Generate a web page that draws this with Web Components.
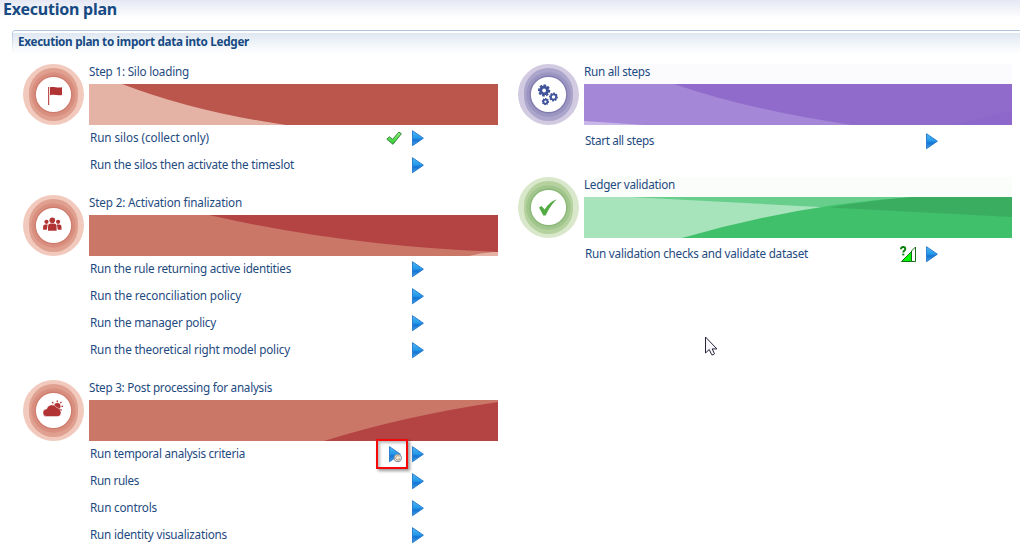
<!DOCTYPE html>
<html lang="en">
<head>
<meta charset="utf-8">
<title>Execution plan</title>
<style>
html,body{margin:0;width:1020px;height:556px;overflow:hidden;background:#fff}
body{font-family:"Noto Sans","Open Sans",sans-serif;font-size:11.7px;color:#1e4a80}
</style>
</head>
<body>
<plan-page>
  <plan-column>
    <plan-step icon="flag" tone="red" banner="silo">
      <fit-text slot="title" width="100">Step 1: Silo loading</fit-text>
      <plan-task status="check"><fit-text width="119">Run silos (collect only)</fit-text></plan-task>
      <plan-task><fit-text width="204">Run the silos then activate the timeslot</fit-text></plan-task>
    </plan-step>
    <plan-step icon="people" tone="red" banner="activation">
      <fit-text slot="title" width="153">Step 2: Activation finalization</fit-text>
      <plan-task><fit-text width="201">Run the rule returning active identities</fit-text></plan-task>
      <plan-task><fit-text width="151">Run the reconciliation policy</fit-text></plan-task>
      <plan-task><fit-text width="126">Run the manager policy</fit-text></plan-task>
      <plan-task><fit-text width="200">Run the theoretical right model policy</fit-text></plan-task>
    </plan-step>
    <plan-step icon="weather" tone="red" banner="analysis">
      <fit-text slot="title" width="183">Step 3: Post processing for analysis</fit-text>
      <plan-task status="schedule"><fit-text width="155">Run temporal analysis criteria</fit-text></plan-task>
      <plan-task><fit-text width="49">Run rules</fit-text></plan-task>
      <plan-task><fit-text width="67">Run controls</fit-text></plan-task>
      <plan-task><fit-text width="137">Run identity visualizations</fit-text></plan-task>
    </plan-step>
  </plan-column>
  <plan-column wide>
    <plan-step icon="gears" tone="purple" banner="all">
      <fit-text slot="title" width="66">Run all steps</fit-text>
      <plan-task><fit-text width="69">Start all steps</fit-text></plan-task>
    </plan-step>
    <plan-step icon="tick" tone="green" banner="validation">
      <fit-text slot="title" width="91">Ledger validation</fit-text>
      <plan-task status="question"><fit-text width="223">Run validation checks and validate dataset</fit-text></plan-task>
    </plan-step>
  </plan-column>
</plan-page>
<script>
/* Text line that adjusts its letter spacing to fill a given width. */
class FitText extends HTMLElement{
  constructor(){
    super();
    this.attachShadow({mode:'open'}).innerHTML='<style>:host{display:inline-block;white-space:nowrap}</style><slot></slot>';
  }
  fit(){
    this.style.letterSpacing='0px';
    const w=this.getBoundingClientRect().width;
    this.style.letterSpacing=((+this.getAttribute('width')-w)/this.textContent.length).toFixed(3)+'px';
  }
}

class PlanPage extends HTMLElement{
  constructor(){
    super();
    this.attachShadow({mode:'open'}).innerHTML=`<style>
:host{display:flex;flex-direction:column;width:1020px;height:556px;position:relative;background:linear-gradient(#e5e8f4,#fff 18px)}
h1{margin:0;height:30px;padding-left:3px;font-size:16px;line-height:19px;font-weight:700;color:#174a83;box-sizing:border-box}
h2{margin:0 0 0 12px;height:24px;box-sizing:border-box;border-top:1px solid #b0c3da;border-top-left-radius:4px;padding:1px 0 0 1px;position:relative;color:#174a83;font-size:11.7px;line-height:19px;font-weight:700;background:linear-gradient(#b0c3da,#fff) 0 0/1px 23px no-repeat}
h2 div{height:22px;padding-left:5px;background:linear-gradient(#dfe7f1,#f1f5f9 11px,#fff 21px);border-top:1px solid #fff;box-sizing:border-box;line-height:17px}
main{display:flex;gap:20px;padding:10px 0 0 23px}
.cursor{position:absolute;left:705px;top:336px}
</style>
<h1><fit-text width="114">Execution plan</fit-text></h1>
<h2><div><fit-text width="231">Execution plan to import data into Ledger</fit-text></div></h2>
<main><slot></slot></main>
<svg class="cursor" width="13" height="21" viewBox="0 0 13 21"><path d="M.5 1v16l3.7-3.5 2.5 5.2q1.5.8 2.8-.9l-2.3-4.9h4.7z" fill="#f7f7fb" stroke="#24243a" stroke-width="1"/></svg>`;
  }
}

class PlanColumn extends HTMLElement{
  constructor(){
    super();
    this.attachShadow({mode:'open'}).innerHTML=`<style>
:host{display:flex;flex-direction:column;width:475px;gap:16px}
:host([wide]){width:494px;gap:19px;--row:33px}
</style><slot></slot>`;
  }
}

const tones={
  red:['#f1c9bd','#e0a090','#d98f7f','#cf7c6c','#b23334','transparent'],
  purple:['#d1cae1','#aba5cb','#9b95c1','#827cae','#41539a','#fbfbfd'],
  green:['#d9e7ca','#b4d19e','#a0c58d','#8bb877','#55ab43','#fbfdfa']
};
function gear(x,y,r,hole){
  let s='';
  for(let i=0;i<8;i++) s+=`<rect x="${-r*.22}" y="${-r}" width="${r*.44}" height="${r*.5}" transform="rotate(${i*45+8})"/>`;
  return `<g transform="translate(${x} ${y})">${s}<circle r="${(r*.78+hole)/2}" fill="none" stroke="currentColor" stroke-width="${r*.78-hole}"/></g>`;
}
const glyphs={
  flag:'<path d="M25 23h1.2v18H25z" opacity=".85"/><path d="M27 23.3c4-1 6 .8 12 0v7.6c-5 .9-7-.8-12 .3z"/>',
  people:'<g transform="translate(-1.2 -.2)"><circle cx="24.7" cy="27" r="2.1"/><circle cx="36.3" cy="27" r="2.1"/><path d="M21.3 35v-3q0-2.4 2.2-2.4h2.4l-.9 5.4zM39.7 35v-3q0-2.4-2.2-2.4h-2.4l.9 5.4z"/><circle cx="30.5" cy="25.5" r="2.8"/><path d="M26.2 36v-4q0-3.2 3-3.2h2.6q3 0 3 3.2v4z"/></g>',
  weather:'<g transform="translate(-1 -.6)"><circle cx="35.3" cy="26.8" r="3.2"/><g fill="none" stroke="currentColor" stroke-width="1.3"><path d="M35.3 22.8v-1.7M31.4 24l-1.2-1.4M38.3 23.8l1.2-1.4M39.4 27h1.6M38.2 30l1.4 1"/></g><path d="M24.8 37.2a3.8 3.8 0 0 1-.2-7.6 5.5 5.5 0 0 1 10-1.6q4.2.5 4.4 4.8t-4 4.4z" stroke="#fff" stroke-width=".5"/></g>',
  gears:gear(26.1,26.5,6.1,1.9)+gear(35.5,33,4.4,1.8)+gear(27.4,37.6,3.6,1.1),
  tick:'<path d="M21 30.6l2.6-1.5 3 3.4q4.2-7.300 12.100-10.300Q31.500 29.400 27.700 38.500H25.300z"/>'
};
const banners={
  silo:[409,'#e5b3a5','<path d="M33 0Q106 28 197 41H409V0z" fill="#bb564d"/>'],
  activation:[409,'#cb7768','<path d="M120 0Q255 31 409 37V0z" fill="#b34443"/><path d="M380 41Q391 38 404 37h5v4z" fill="#e5b3a5"/>'],
  analysis:[409,'#cb7768','<path d="M235 41Q315 16 409 2V41z" fill="#b34443"/>'],
  all:[428,'#a487d6','<path d="M90 0Q165 26 268 41H428V0z" fill="#906bcb"/><path d="M0 37L60 41H0z" fill="#c9b8e7"/><path d="M372 41Q398 33 428 27V41z" fill="#8d68ca"/>'],
  validation:[428,'#a7e3bb','<path d="M46 0L428 20V0z" fill="#67ce8b"/><path d="M98 41Q216 7 330 0H428V41z" fill="#40c06a"/><path d="M246 10.5Q288 3 330 0H428V20z" fill="#3aad60"/>']
};

class PlanStep extends HTMLElement{
  constructor(){super();this.attachShadow({mode:'open'});}
  connectedCallback(){
    const t=tones[this.getAttribute('tone')], [w,bg,shapes]=banners[this.getAttribute('banner')];
    this.shadowRoot.innerHTML=`<style>
:host{display:grid;grid-template-columns:61px 1fr;column-gap:5px;align-items:start}
.body{display:flex;flex-direction:column}
.title{height:20px;line-height:14px;background:${t[5]}}
.banner{display:block;background:${bg}}
svg{display:block}
</style>
<svg width="61" height="61" viewBox="0 0 61 61"><circle cx="30.5" cy="30.5" r="30.5" fill="${t[0]}"/><rect x="6" y="4" width="49" height="53" rx="24.5" fill="${t[1]}"/><circle cx="30.5" cy="30.5" r="22.2" fill="${t[2]}"/><circle cx="30.5" cy="30.5" r="19" fill="${t[3]}"/><circle cx="30.5" cy="30.5" r="17.6" fill="#fff"/><g fill="${t[4]}" color="${t[4]}">${glyphs[this.getAttribute('icon')]}</g></svg>
<div class="body"><div class="title"><slot name="title"></slot></div>
<svg class="banner" width="${w}" height="41" viewBox="0 0 ${w} 41">${shapes}</svg>
<slot></slot></div>`;
  }
}

const play='<path d="M2.500.700v15L13.400 8.200z" fill="url(#p)" stroke="#2f7fce" stroke-width="1"/>';
const defs='<defs><linearGradient id="p" x1="0" y1="0" x2="0" y2="1"><stop stop-color="#4fb9f3"/><stop offset=".48" stop-color="#2499ea"/><stop offset=".62" stop-color="#1473d2"/><stop offset="1" stop-color="#45a3ea"/></linearGradient><linearGradient id="g" x1="0" y1="0" x2="0" y2="1"><stop stop-color="#8ff37c"/><stop offset="1" stop-color="#2fcb33"/></linearGradient></defs>';
const states={
  check:'<path d="M.8 9.200l2.600-2.400 3.200 2.500 6.300-7.200 2.500 1.600L7 14.300z" fill="url(#g)" stroke="#2b7a30" stroke-width=".9"/>',
  schedule:'<g transform="translate(1 0)">'+play+'</g><circle cx="11.8" cy="12" r="3.6" fill="#f6f1e6" stroke="#8d98aa" stroke-width="1.1"/><path d="M13.6 10.5a2.2 2.2 0 1 0 .2 2.5h-2" fill="none" stroke="#a98f62" stroke-width=".8"/>',
  question:'<path d="M1.500 15.500h10V5.500z" fill="#00f500" stroke="#176d17"/><path d="M11.500 15.500V5L15.500 1v14.500z" fill="#fff" stroke="#176d17"/><path d="M.9 3.200Q.9 1 3.100 1t2.200 2q0 1.200-1.200 1.900-.8.500-.8 1.500" fill="none" stroke="#087d08" stroke-width="1.9"/><path d="M2.300 7.600h2v1.800h-2z" fill="#087d08"/>'
};
class PlanTask extends HTMLElement{
  constructor(){super();this.attachShadow({mode:'open'});}
  connectedCallback(){
    const s=this.getAttribute('status');
    this.shadowRoot.innerHTML=`<style>
:host{display:flex;align-items:center;box-sizing:border-box;height:var(--row,27px);padding:0 72px 2px 1px;gap:8px;line-height:16px}
.label{flex:1;padding-bottom:2px}
svg{display:block;overflow:visible}
.state{position:relative;width:16px;height:16px}
.mark{position:absolute;left:-10px;top:-7px;width:32px;height:30px;box-sizing:border-box;border:2px solid #f40808;box-shadow:2px 2px 3px #0006,inset 2px 2px 3px #0004}
</style><div class="label"><slot></slot></div>
${s?`<div class="state"><svg width="16" height="16" viewBox="0 0 16 16">${defs}${states[s]}</svg>${s==='schedule'?'<div class="mark"></div>':''}</div>`:''}
<svg width="16" height="16" viewBox="0 0 16 16">${defs}${play}</svg>`;
  }
}
customElements.define('fit-text',FitText);
customElements.define('plan-page',PlanPage);
customElements.define('plan-column',PlanColumn);
customElements.define('plan-step',PlanStep);
customElements.define('plan-task',PlanTask);
/* Labels are measured once every container has been laid out. */
for(const root of [document,document.querySelector('plan-page').shadowRoot])
  root.querySelectorAll('fit-text').forEach(e=>e.fit());
</script>
</body>
</html>
